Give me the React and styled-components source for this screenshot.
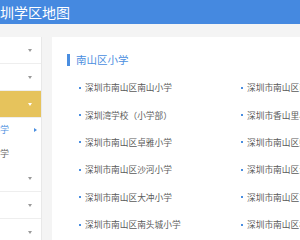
import React from "react";
import styled, { createGlobalStyle } from "styled-components";

const GlobalStyle = createGlobalStyle`
  html, body {
    margin: 0;
    padding: 0;
    overflow: hidden;
    background: #f4f4f4;
    font-family: "Noto Sans CJK SC", "Noto Sans", sans-serif;
  }
`;

const Page = styled.div`
  margin-left: -66px;
  width: 600px;
`;

const Header = styled.header`
  height: 24px;
  background: #4589e0;
  display: flex;
  align-items: center;
  padding-left: 52px;
`;

const Title = styled.h1`
  margin: 0;
  color: #fff;
  font-size: 14px;
  font-weight: 400;
  line-height: 1;
`;

const Body = styled.div`
  display: flex;
  gap: 10px;
  padding-top: 13px;
`;

const Sidebar = styled.nav`
  width: 107px;
  background: #fff;
  border-right: 1px solid #e8e8e8;
  display: flex;
  flex-direction: column;
`;

const Row = styled.div`
  height: 26px;
  border-bottom: 1px solid #eeeeee;
  display: flex;
  align-items: center;
  justify-content: space-between;
  padding: 0 7px 0 12px;
  font-size: 10px;
  color: ${(p) => (p.$active ? "#fff" : "#555")};
  background: ${(p) => (p.$active ? "#e6c35c" : "#fff")};
`;

const Caret = styled.span`
  width: 0;
  height: 0;
  border-left: 2.5px solid transparent;
  border-right: 2.5px solid transparent;
  border-top: 3px solid ${(p) => (p.$light ? "#fff" : "#9a9a9a")};
  margin-right: 2px;
`;

const SubRow = styled.div`
  height: 23.5px;
  display: flex;
  align-items: center;
  justify-content: space-between;
  padding: 0 4px 0 30px;
  font-size: 9px;
  color: ${(p) => (p.$active ? "#4a8ee0" : "#666")};
`;

const Pointer = styled.span`
  width: 0;
  height: 0;
  border-top: 2.5px solid transparent;
  border-bottom: 2.5px solid transparent;
  border-left: 3px solid #4a8ee0;
`;

const Panel = styled.main`
  flex: 1;
  background: #fff;
  padding: 17px 0 0 15px;
  min-height: 220px;
`;

const PanelTitle = styled.h2`
  margin: 0;
  display: flex;
  align-items: center;
  gap: 6px;
  font-size: 10.5px;
  font-weight: 400;
  color: #4a8ee0;
  line-height: 12px;
  &::before {
    content: "";
    width: 3px;
    height: 12px;
    background: #4a8ee0;
  }
`;

const List = styled.ul`
  list-style: none;
  margin: 8px 0 0;
  padding: 0 0 0 12px;
  display: grid;
  grid-template-columns: repeat(2, 162px);
  grid-auto-rows: 27.4px;
`;

const Item = styled.li`
  display: flex;
  align-items: center;
  gap: 4px;
  font-size: 8.7px;
  color: #5a5a5a;
  white-space: nowrap;
  &::before {
    content: "";
    width: 2px;
    height: 2px;
    background: #4a8ee0;
  }
`;

const districts = ["罗湖区", "福田区"];
const tail = ["盐田区", "宝安区", "龙岗区"];
const schools = [
  "深圳市南山区南山小学",
  "深圳市南山区前海小学",
  "深圳湾学校（小学部）",
  "深圳市香山里小学",
  "深圳市南山区卓雅小学",
  "深圳市南山区蛇口小学",
  "深圳市南山区沙河小学",
  "深圳市南山区海滨小学",
  "深圳市南山区大冲小学",
  "深圳市南山区育才小学",
  "深圳市南山区南头城小学",
  "深圳市南山区松坪小学",
];

export default function App() {
  return (
    <>
      <GlobalStyle />
      <Page>
        <Header>
          <Title>深圳学区地图</Title>
        </Header>
        <Body>
          <Sidebar>
            {districts.map((d) => (
              <Row key={d}>
                {d}
                <Caret />
              </Row>
            ))}
            <Row $active>
              南山区
              <Caret $light />
            </Row>
            <SubRow $active>
              南山区小学
              <Pointer />
            </SubRow>
            <SubRow>南山区中学</SubRow>
            {tail.map((d) => (
              <Row key={d}>
                {d}
                <Caret />
              </Row>
            ))}
          </Sidebar>
          <Panel>
            <PanelTitle>南山区小学</PanelTitle>
            <List>
              {schools.map((s) => (
                <Item key={s}>{s}</Item>
              ))}
            </List>
          </Panel>
        </Body>
      </Page>
    </>
  );
}
